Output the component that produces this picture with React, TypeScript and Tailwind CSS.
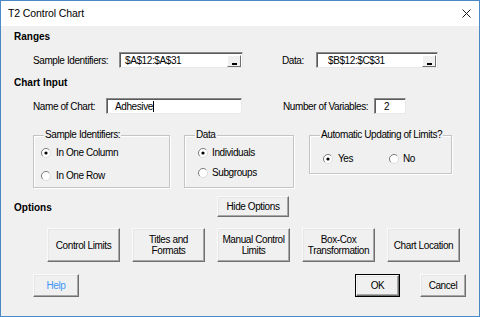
import React from "react";

function Radio({ checked }: { checked?: boolean }) {
  return (
    <svg width="10" height="10" viewBox="0 0 10 10" className="shrink-0">
      <circle cx="5" cy="5" r="4.5" fill="white" />
      <path d="M8.2 1.8 A4.5 4.5 0 0 0 1.8 8.2" stroke="#7a7a7a" fill="none" strokeWidth="1" />
      <path d="M1.8 8.2 A4.5 4.5 0 0 0 8.2 1.8" stroke="#dcdcdc" fill="none" strokeWidth="1" />
      {checked && <circle cx="5" cy="5" r="1.6" fill="#000" />}
    </svg>
  );
}

function RadioItem({ label, checked, gap = "gap-[5px]" }: { label: string; checked?: boolean; gap?: string }) {
  return (
    <div className={`flex items-center h-[12px] ${gap}`}>
      <Radio checked={checked} />
      <span className="leading-[12px]">{label}</span>
    </div>
  );
}

function RefButton() {
  return (
    <div className="w-[14px] h-[12px] mr-[1px] bg-[#f0f0f0] border border-t-white border-l-white border-r-[#6f6f6f] border-b-[#6f6f6f] flex items-end justify-center pb-[1px]">
      <div className="w-[5px] h-[2px] bg-black" />
    </div>
  );
}

const sunken =
  "bg-white border border-t-[#8a8a8a] border-l-[#8a8a8a] border-r-[#e8e8e8] border-b-[#e8e8e8] shadow-[inset_1px_1px_0_#5a5a5a]";
const raised =
  "bg-[#f0f0f0] border border-t-[#fafafa] border-l-[#fafafa] border-r-[#6f6f6f] border-b-[#6f6f6f] shadow-[inset_-1px_-1px_0_#a8a8a8,inset_1px_1px_0_#e6e6e6]";

function Group({ title, className, children }: { title: string; className: string; children: React.ReactNode }) {
  return (
    <div className={`relative border border-[#c4c4c4] shadow-[1px_1px_0_#ffffff,inset_1px_1px_0_#ffffff] ${className}`}>
      <span className="absolute -top-[7px] left-[10px] px-[1px] bg-[#f0f0f0] leading-[12px]">{title}</span>
      {children}
    </div>
  );
}

export default function App() {
  return (
    <div className="w-[480px] h-[317px] border border-[#4a88c7] bg-[#f0f0f0] flex flex-col overflow-hidden text-black font-['Liberation_Sans',Arial,sans-serif] text-[10px] tracking-[-0.4px]">
      <div className="h-[25px] bg-white flex items-center justify-between pl-[7px] pr-[8px] shrink-0">
        <span className="text-[10.5px] tracking-[-0.1px]">T2 Control Chart</span>
        <svg width="9" height="9" viewBox="0 0 9 9">
          <path d="M0.5 0.5 L8.5 8.5 M8.5 0.5 L0.5 8.5" stroke="#1a1a1a" strokeWidth="1" />
        </svg>
      </div>

      <div className="flex flex-col pl-[13px]">
        <div className="mt-[5px] text-[10px] font-bold leading-[12px] tracking-normal">Ranges</div>

        <div className="mt-[9px] flex items-center h-[16px]">
          <span className="ml-[19px] w-[86px]">Sample Identifiers:</span>
          <div className={`w-[124px] h-[16px] flex items-center justify-between ${sunken}`}>
            <span className="pl-[5px]">$A$12:$A$31</span>
            <div className="self-end">
              <RefButton />
            </div>
          </div>
          <span className="ml-[39px] w-[34px]">Data:</span>
          <div className={`w-[122px] h-[16px] flex items-center justify-between ${sunken}`}>
            <span className="pl-[11px]">$B$12:$C$31</span>
            <div className="self-end">
              <RefButton />
            </div>
          </div>
        </div>

        <div className="mt-[9px] text-[10px] font-bold leading-[12px] tracking-normal">Chart Input</div>

        <div className="mt-[9px] flex items-center h-[16px]">
          <span className="ml-[19px] w-[73px]">Name of Chart:</span>
          <div className={`w-[136px] h-[16px] flex items-center ${sunken}`}>
            <span className="pl-[8px]">Adhesive</span>
            <div className="w-[1px] h-[11px] bg-black" />
          </div>
          <span className="ml-[41px] w-[91px]">Number of Variables:</span>
          <div className={`w-[32px] h-[16px] flex items-center ${sunken}`}>
            <span className="pl-[9px]">2</span>
          </div>
        </div>

        <div className="mt-[21px] flex items-start">
          <Group title="Sample Identifiers:" className="ml-[19px] w-[137px] h-[53px]">
            <div className="flex flex-col pt-[11px] pl-[7px] gap-[11px]">
              <RadioItem label="In One Column" checked />
              <RadioItem label="In One Row" />
            </div>
          </Group>
          <Group title="Data" className="ml-[14px] w-[110px] h-[53px]">
            <div className="flex flex-col pt-[11px] pl-[13px] gap-[8px]">
              <RadioItem label="Individuals" checked gap="gap-[4px]" />
              <RadioItem label="Subgroups" gap="gap-[4px]" />
            </div>
          </Group>
          <Group title="Automatic Updating of Limits?" className="ml-[15px] w-[143px] h-[39px]">
            <div className="flex pt-[17px] pl-[13px]">
              <div className="w-[66px]">
                <RadioItem label="Yes" checked />
              </div>
              <RadioItem label="No" gap="gap-[4px]" />
            </div>
          </Group>
        </div>

        <div className="mt-[8px] flex items-center h-[21px]">
          <span className="w-[203px] text-[10px] font-bold tracking-normal pt-[2px]">Options</span>
          <button className={`w-[72px] h-[21px] flex items-center justify-center ${raised}`}>Hide Options</button>
        </div>

        <div className="mt-[11px] ml-[33px] flex gap-[12px]">
          {[
            ["Control Limits"],
            ["Titles and", "Formats"],
            ["Manual Control", "Limits"],
            ["Box-Cox", "Transformation"],
            ["Chart Location"],
          ].map((lines, i) => (
            <button
              key={i}
              className={`w-[73px] h-[34px] flex flex-col items-center justify-center leading-[11px] ${raised}`}
            >
              {lines.map((l) => (
                <span key={l}>{l}</span>
              ))}
            </button>
          ))}
        </div>

        <div className="mt-[12px] flex h-[23px]">
          <button className={`ml-[19px] w-[46px] h-[23px] flex items-center justify-center text-[#3f97f5] ${raised}`}>
            Help
          </button>
          <div className="ml-[276px] w-[45px] h-[23px] border border-black">
            <button className={`w-full h-full flex items-center justify-center ${raised}`}>OK</button>
          </div>
          <button className={`ml-[20px] w-[46px] h-[23px] flex items-center justify-center ${raised}`}>Cancel</button>
        </div>
      </div>
    </div>
  );
}
